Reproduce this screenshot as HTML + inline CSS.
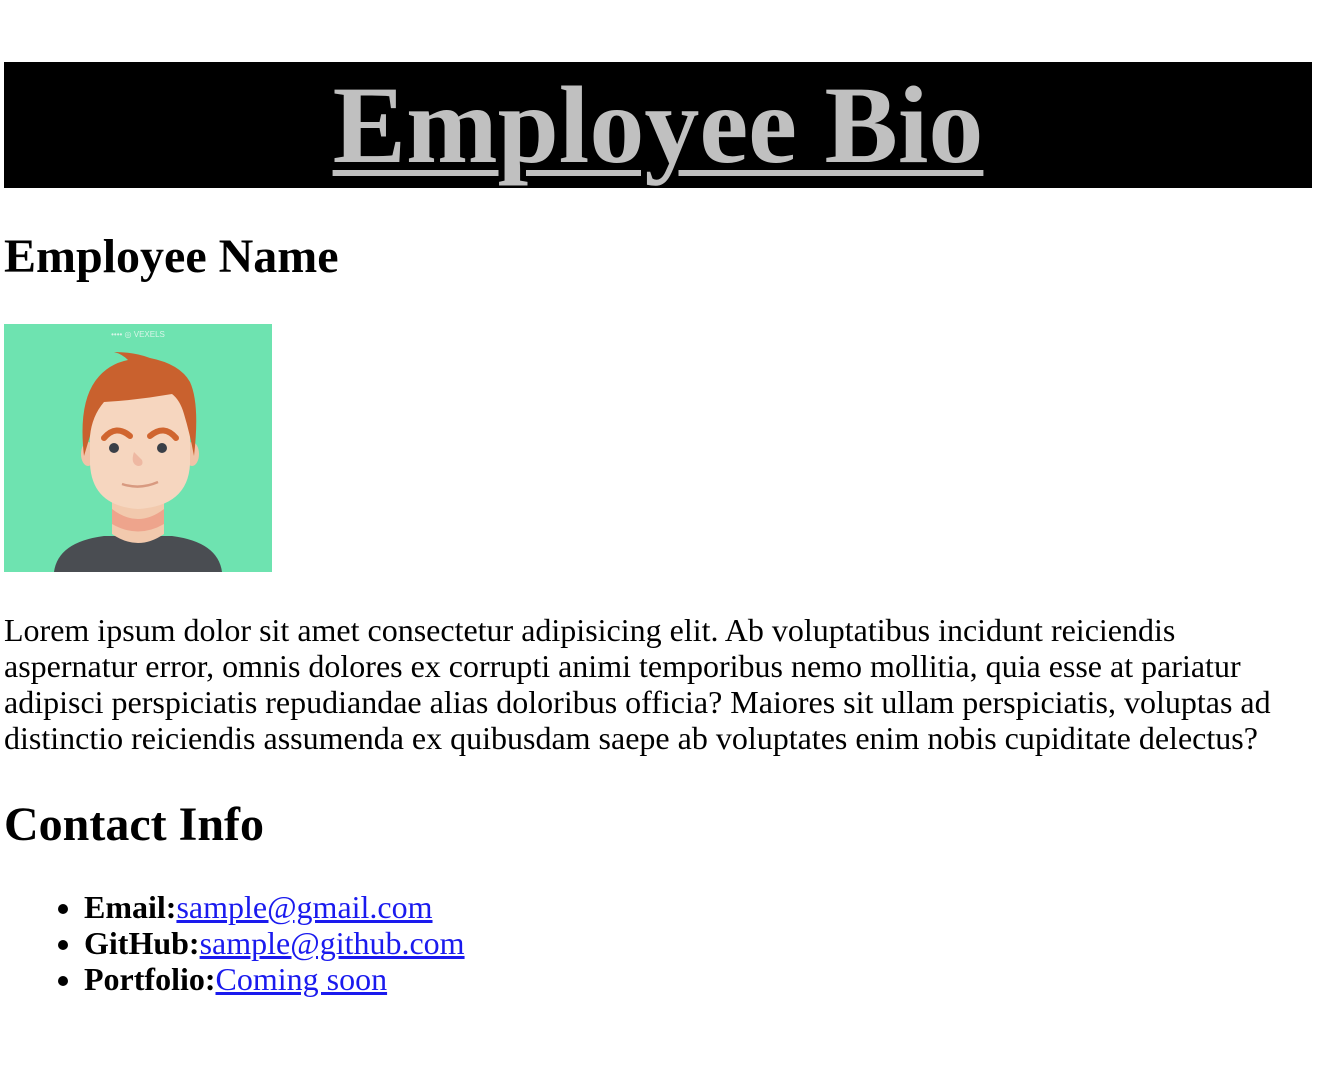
<!DOCTYPE html>
<html><head><meta charset="utf-8"><style>
body{margin:0;width:1328px;height:1078px;background:#fff;font-family:"Liberation Serif",serif;color:#000;position:relative;overflow:hidden}
.a{position:absolute;white-space:nowrap;margin:0}
#hdr{position:absolute;left:4px;top:62px;width:1308px;height:126px;background:#000}
#hdr h1{margin:0;text-align:center;font-size:110px;line-height:126px;color:#c0c0c0;font-weight:bold;text-decoration:underline;text-decoration-thickness:6px;text-underline-offset:8px}
h2{font-weight:bold}
p.l{font-size:32px;line-height:36px;left:4px}
ul{position:absolute;left:0;top:889px;margin:0;padding-left:84px;font-size:32px;line-height:36px}
a{color:#1a1aee;text-decoration:underline}
</style></head><body>
<div id="hdr"><h1>Employee Bio</h1></div>
<h2 class="a" style="left:4px;top:229px;font-size:48px;line-height:56px">Employee Name</h2>
<svg class="a" style="left:4px;top:324px" width="268" height="248" viewBox="0 0 268 248">
<rect width="268" height="248" fill="#6ee3b0"/>
<text x="134" y="13" font-size="8" fill="#d8f5e8" text-anchor="middle" font-family="Liberation Sans">•••• ◎ VEXELS</text>
<path d="M50 248 Q54 218 100 212 L168 212 Q214 218 218 248 Z" fill="#4a4d52"/>
<path d="M108 170 L108 210 Q134 228 160 210 L160 170 Z" fill="#f2c9ad"/>
<path d="M108 185 Q134 205 160 185 L160 200 Q134 215 108 200Z" fill="#eea48c"/>
<ellipse cx="84" cy="130" rx="7" ry="12" fill="#f0c3a8"/>
<ellipse cx="188" cy="130" rx="7" ry="12" fill="#f0c3a8"/>
<path d="M86 80 Q86 44 134 42 Q186 44 186 90 L186 140 Q184 182 134 185 Q88 182 86 140 Z" fill="#f6d6bf"/>
<path d="M80 132 Q74 80 92 56 Q104 40 124 36 Q118 30 110 28 Q130 28 146 34 Q176 40 186 58 Q196 80 190 132 Q186 110 180 90 Q176 76 168 70 Q134 76 100 78 Q88 92 86 112 Z" fill="#c9612e"/>
<path d="M100 114 Q112 100 126 112" stroke="#d0652f" stroke-width="6" fill="none" stroke-linecap="round"/>
<path d="M146 112 Q160 100 172 114" stroke="#d0652f" stroke-width="6" fill="none" stroke-linecap="round"/>
<circle cx="110" cy="124" r="5" fill="#3a3f47"/>
<circle cx="158" cy="124" r="5" fill="#3a3f47"/>
<path d="M130 128 Q126 140 134 142 Q140 142 138 136" fill="#eeb8a2"/>
<path d="M118 160 Q136 166 154 158" stroke="#d89a80" stroke-width="2.5" fill="none"/>
</svg>
<p class="a l" style="top:612px">Lorem ipsum dolor sit amet consectetur adipisicing elit. Ab voluptatibus incidunt reiciendis</p>
<p class="a l" style="top:648px">aspernatur error, omnis dolores ex corrupti animi temporibus nemo mollitia, quia esse at pariatur</p>
<p class="a l" style="top:684px">adipisci perspiciatis repudiandae alias doloribus officia? Maiores sit ullam perspiciatis, voluptas ad</p>
<p class="a l" style="top:720px">distinctio reiciendis assumenda ex quibusdam saepe ab voluptates enim nobis cupiditate delectus?</p>
<h2 class="a" style="left:4px;top:797px;font-size:48px;line-height:56px">Contact Info</h2>
<ul>
<li><b>Email:</b><a>sample@gmail.com</a></li>
<li><b>GitHub:</b><a>sample@github.com</a></li>
<li><b>Portfolio:</b><a>Coming soon</a></li>
</ul>
</body></html>
